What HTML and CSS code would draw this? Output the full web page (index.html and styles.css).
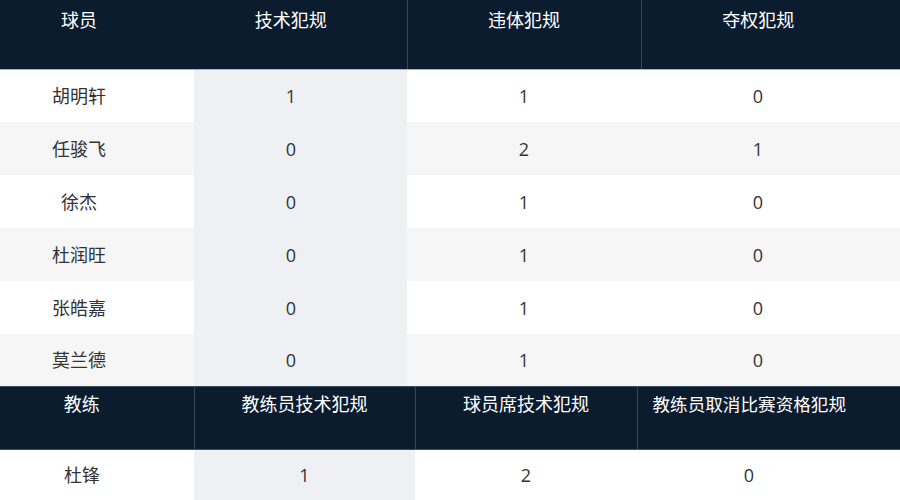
FILE: index.html
```html
<!DOCTYPE html>
<html lang="zh-CN">
<head>
<meta charset="utf-8">
<title>犯规统计</title>
<link rel="stylesheet" href="styles.css">
</head>
<body>
<table class="stats players">
  <colgroup>
    <col class="w-a"><col class="w-b"><col class="w-c"><col class="w-d">
  </colgroup>
  <thead>
    <tr>
      <th class="c1">球员</th>
      <th class="c2">技术犯规</th>
      <th class="c3 sep">违体犯规</th>
      <th class="c4 sep">夺权犯规</th>
    </tr>
  </thead>
  <tbody>
    <tr><td class="c1">胡明轩</td><td class="c2 shade">1</td><td class="c3">1</td><td class="c4">0</td></tr>
    <tr><td class="c1">任骏飞</td><td class="c2 shade">0</td><td class="c3">2</td><td class="c4">1</td></tr>
    <tr><td class="c1">徐杰</td><td class="c2 shade">0</td><td class="c3">1</td><td class="c4">0</td></tr>
    <tr><td class="c1">杜润旺</td><td class="c2 shade">0</td><td class="c3">1</td><td class="c4">0</td></tr>
    <tr><td class="c1">张皓嘉</td><td class="c2 shade">0</td><td class="c3">1</td><td class="c4">0</td></tr>
    <tr><td class="c1">莫兰德</td><td class="c2 shade">0</td><td class="c3">1</td><td class="c4">0</td></tr>
  </tbody>
</table>
<table class="stats coaches">
  <colgroup>
    <col class="w-e"><col class="w-f"><col class="w-g"><col class="w-h">
  </colgroup>
  <thead>
    <tr>
      <th class="k1">教练</th>
      <th class="k2 sep">教练员技术犯规</th>
      <th class="k3 sep">球员席技术犯规</th>
      <th class="k4 sep">教练员取消比赛资格犯规</th>
    </tr>
  </thead>
  <tbody>
    <tr><td class="k1">杜锋</td><td class="k2 shade">1</td><td class="k3">2</td><td class="k4">0</td></tr>
  </tbody>
</table>
</body>
</html>
```
FILE: styles.css
```css
html, body {
  margin: 0;
  padding: 0;
  background: #ffffff;
}

body {
  font-family: "Open Sans", "Noto Sans CJK SC", sans-serif;
  font-size: 18px;
  color: #333333;
  width: 900px;
  height: 500px;
  overflow: hidden;
}

.stats {
  width: 900px;
  border-collapse: collapse;
  border-spacing: 0;
  table-layout: fixed;
}

.w-a { width: 194px; }
.w-b { width: 213px; }
.w-c { width: 234px; }
.w-d { width: 259px; }
.w-e { width: 194px; }
.w-f { width: 221px; }
.w-g { width: 222px; }
.w-h { width: 263px; }

.stats th {
  background: #0b1c2e;
  color: #ffffff;
  font-weight: normal;
  text-align: center;
  vertical-align: top;
  line-height: 24px;
  padding: 0;
  box-sizing: border-box;
}

.players th {
  height: 69px;
  padding-top: 8px;
  border-bottom: 1px solid #a9b4c0;
}

.coaches th {
  height: 63px;
  padding-top: 5px;
  border-top: 1px solid #3b4c5e;
  border-bottom: 1px solid #3b4c5e;
}

.stats th.sep {
  border-left: 1px solid #34465a;
}

.stats td {
  text-align: center;
  vertical-align: middle;
  line-height: 24px;
  padding: 0;
  height: 53px;
  box-sizing: border-box;
}

.players tbody tr:last-child td {
  height: 52px;
}

.players tbody tr:nth-child(even) td {
  background: #f6f6f6;
}

.stats td.shade,
.players tbody tr:nth-child(even) td.shade {
  background: #eef0f3;
}

.coaches td {
  height: 51px;
}

.c1 { padding-right: 36px !important; }
.c2 { padding-right: 19px !important; }
.c4 { padding-right: 25px !important; }
.k1 { padding-right: 30px !important; }
.k4 { padding-right: 39px !important; }

.coaches th.k4 {
  font-size: 17.6px;
}
```
